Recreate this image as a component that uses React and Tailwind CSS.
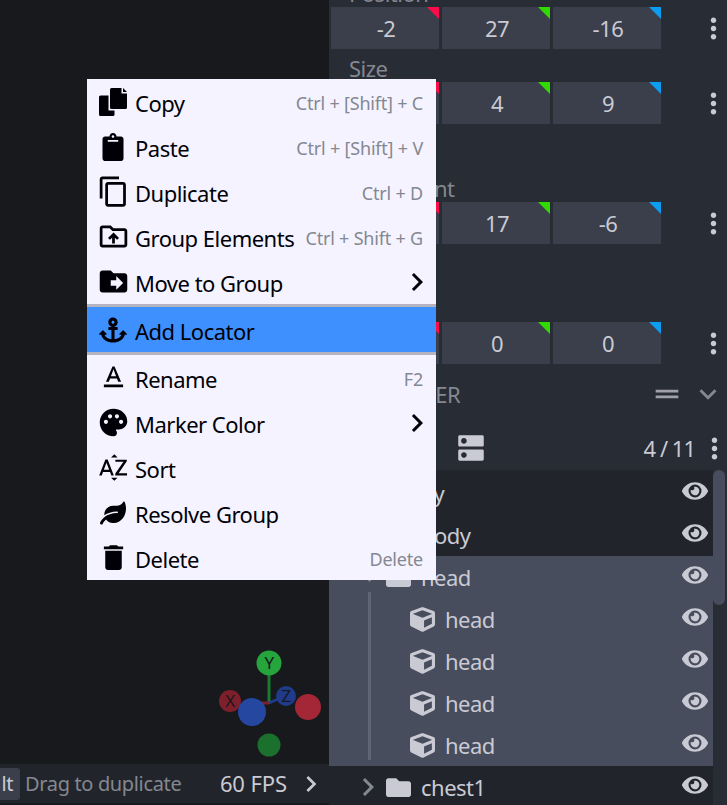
import { FaAnchor, FaClipboard, FaCube, FaEye, FaFolder, FaLeaf } from 'react-icons/fa';
import {
  MdContentCopy,
  MdDelete,
  MdDns,
  MdDragHandle,
  MdDriveFileMove,
  MdExpandMore,
  MdMoreVert,
  MdNavigateNext,
  MdOutlineDriveFolderUpload,
  MdPalette,
  MdSortByAlpha,
  MdTextFormat,
} from 'react-icons/md';

function CopyIcon() {
  return (
    <svg width="28" height="28" viewBox="0 0 28 28" fill="currentColor">
      <path d="M12.500 0H22.500V5.500H28V19.500a1.500 1.500 0 0 1-1.500 1.500H12.500A1.500 1.500 0 0 1 11 19.500V1.500A1.500 1.500 0 0 1 12.500 0z" />
      <path d="M24 0L28 4H24z" />
      <path d="M1.500 7.500H9.500V22.500H15.500V26.500a1.500 1.500 0 0 1-1.500 1.500H1.500A1.500 1.500 0 0 1 0 26.500V9A1.500 1.500 0 0 1 1.500 7.500z" />
    </svg>
  );
}

function Field({ value, color }) {
  return (
    <div className="relative shrink-0 w-[108px] h-[42px] pl-[2px] pt-[1px] bg-[#3a3f4b] flex items-center justify-center text-[#cacad4]">
      {value}
      <div className={`absolute top-0 right-0 w-3 h-3 [clip-path:polygon(0_0,100%_0,100%_100%)] ${color}`} />
    </div>
  );
}

function VectorRow({ label, values, className }) {
  return (
    <div className={`shrink-0 ${className || ''}`}>
      <div className="h-[33px] pl-[18px] text-[#848891] leading-[38px]">{label}</div>
      <div className="flex items-center gap-[3px]">
        <Field value={values[0]} color="bg-[#ff0b4a]" />
        <Field value={values[1]} color="bg-[#30d900]" />
        <Field value={values[2]} color="bg-[#0c9cf0]" />
        <MdMoreVert size={33} className="shrink-0 ml-[33px] text-[#cacad4]" />
      </div>
    </div>
  );
}

function OutlinerRow({ name, selected, child, open, hideChevron }) {
  return (
    <div className={`relative h-[42px] flex items-center ${selected ? 'bg-[#474d5d]' : ''}`}>
      {child ? (
        <>
          <FaCube size={25} className="ml-[81px] text-[#cacad4]" />
          <span className="ml-[10px] text-[#cacad4]">{name}</span>
        </>
      ) : (
        <>
          {hideChevron ? (
            <div className="w-[28px] ml-[29px]" />
          ) : open ? (
            <MdExpandMore size={30} className="ml-[24px] w-[33px] text-[#848891]" />
          ) : (
            <MdNavigateNext size={36} className="ml-[21px] w-[36px] text-[#848891]" />
          )}
          <FaFolder size={25} className="text-[#cacad4]" />
          <span className="ml-[10px] text-[#cacad4]">{name}</span>
        </>
      )}
      <FaEye size={26} className="absolute left-[353px] top-[6px] text-[#cacad4]" />
    </div>
  );
}

const menuItems = [
  { icon: <CopyIcon />, label: 'Copy', keys: 'Ctrl + [Shift] + C' },
  { icon: <FaClipboard size={28} />, label: 'Paste', keys: 'Ctrl + [Shift] + V' },
  { icon: <MdContentCopy size={33} />, label: 'Duplicate', keys: 'Ctrl + D' },
  { icon: <MdOutlineDriveFolderUpload size={33} />, label: 'Group Elements', keys: 'Ctrl + Shift + G' },
  { icon: <MdDriveFileMove size={33} />, label: 'Move to Group', more: true },
  { sep: true },
  { icon: <FaAnchor size={28} />, label: 'Add Locator', active: true },
  { sep: true },
  { icon: <MdTextFormat size={33} />, label: 'Rename', keys: 'F2' },
  { icon: <MdPalette size={33} />, label: 'Marker Color', more: true },
  { icon: <MdSortByAlpha size={33} />, label: 'Sort' },
  { icon: <FaLeaf size={26} />, label: 'Resolve Group' },
  { icon: <MdDelete size={33} />, label: 'Delete', keys: 'Delete' },
];

function ContextMenu() {
  return (
    <div className="absolute left-[87px] top-[79px] w-[349px] bg-[#f4f3ff] text-[#000006]">
      {menuItems.map((item, i) =>
        item.sep ? (
          <div key={i} className="h-[3px] bg-[#b4b3bf]" />
        ) : (
          <div key={i} className={`h-[45px] flex items-center pr-[13px] ${item.active ? 'bg-[#3e90ff]' : ''}`}>
            <div className="w-[48px] pl-[4px] flex justify-center shrink-0">{item.icon}</div>
            <span className="pt-[3px]">{item.label}</span>
            {item.keys && (
              <span className="ml-auto pt-[3px] text-[18px] tracking-[-0.2px] text-[#848891]">{item.keys}</span>
            )}
            {item.more && <MdNavigateNext size={36} className="ml-auto -mr-[12px]" />}
          </div>
        ),
      )}
    </div>
  );
}

function Gizmo() {
  return (
    <svg className="absolute left-[210px] top-[640px]" width="119" height="124" viewBox="210 640 119 124">
      <line x1="269" y1="675" x2="269" y2="704" stroke="#1a7a2f" strokeWidth="3" />
      <line x1="269" y1="703" x2="252" y2="703" stroke="#7e1f2c" strokeWidth="3" />
      <line x1="269" y1="703" x2="285" y2="696" stroke="#1f3b8a" strokeWidth="3" />
      <circle cx="269" cy="663" r="12.5" fill="#25a53c" />
      <text x="269" y="669" textAnchor="middle" fontSize="17" fill="#17191d">Y</text>
      <circle cx="230" cy="701" r="11" fill="#7e1f2c" />
      <text x="230" y="707" textAnchor="middle" fontSize="17" fill="#17191d">X</text>
      <circle cx="286" cy="696" r="10" fill="#1f3b8a" />
      <text x="286" y="702" textAnchor="middle" fontSize="17" fill="#17191d">Z</text>
      <circle cx="252" cy="712" r="14" fill="#2547a0" />
      <circle cx="308" cy="707" r="13" fill="#a32736" />
      <circle cx="269" cy="745" r="11.5" fill="#1a702c" />
    </svg>
  );
}

export default function App() {
  return (
    <div className="relative w-[727px] h-[805px] overflow-hidden flex bg-[#17191d] font-['Noto_Sans',sans-serif] text-[22px] tracking-[-0.5px]">
      {/* viewport */}
      <div className="w-[329px] flex flex-col">
        <div className="flex-1" />
        <div className="h-[39px] mb-[2px] bg-[#21252b] flex items-center text-[20px]">
          <div className="h-[32px] w-[20px] bg-[#3a3f4b] rounded-r-[3px] overflow-hidden flex items-center justify-end pr-[7px] text-[#cacad4]">
            <span>lt</span>
          </div>
          <span className="ml-[5px] tracking-[-0.35px] text-[#848891]">Drag to duplicate</span>
          <span className="ml-auto text-[22px] tracking-[-0.1px] text-[#cacad4]">60 FPS</span>
          <MdNavigateNext size={32} className="ml-[8px] mr-[2px] text-[#cacad4]" />
        </div>
      </div>

      {/* right panel */}
      <div className="relative w-[398px] bg-[#282c34] pl-[2px] -mt-[26px] flex flex-col">
        <VectorRow label="Position" values={['-2', '27', '-16']} />
        <VectorRow label="Size" values={['8', '4', '9']} />
        <VectorRow className="mt-[45px]" label="Pivot Point" values={['7', '17', '-6']} />
        <VectorRow className="mt-[45px]" label="Rotation" values={['0', '0', '0']} />

        <div className="shrink-0 h-[40px] mt-[10px] mb-[2px] flex items-center pl-[26px] text-[#848891]">
          OUTLINER
          <MdDragHandle size={34} className="absolute left-[321px] text-[#a0a0aa]" />
          <MdExpandMore size={34} className="absolute left-[362px] text-[#848891]" />
        </div>

        <div className="shrink-0 h-[54px] pt-[10px] flex items-center text-[#cacad4]">
          <MdDns size={34} className="ml-[123px]" />
          <span className="ml-auto tracking-[-1px]">4 / 11</span>
          <MdMoreVert size={33} className="ml-[3px] -mr-[4px]" />
        </div>

        <div className="shrink-0 -ml-[2px] w-[384px] bg-[#21252b] pt-[2px] flex-1">
          <OutlinerRow name="by" hideChevron />
          <OutlinerRow name="body" hideChevron />
          <div className="relative">
            <OutlinerRow name="head" selected open />
            <OutlinerRow name="head" selected child />
            <OutlinerRow name="head" selected child />
            <OutlinerRow name="head" selected child />
            <OutlinerRow name="head" selected child />
            <div className="absolute left-[39px] top-[36px] bottom-[6px] w-[3px] bg-[#5f6575]" />
          </div>
          <OutlinerRow name="chest1" />
        </div>

        <div className="absolute left-[384px] top-[496px] w-[12px] h-[135px] rounded-[6px] bg-[#474d5d]" />
      </div>

      <Gizmo />
      <ContextMenu />
    </div>
  );
}
